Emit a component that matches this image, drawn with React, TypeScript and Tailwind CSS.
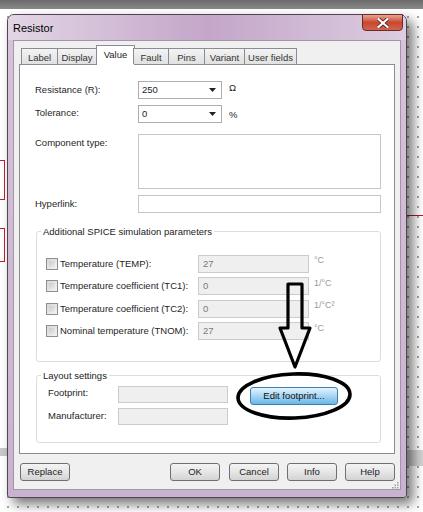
import React from 'react';

const tabs = [
  { label: 'Label', w: 'w-[37px]' },
  { label: 'Display', w: 'w-[40px]' },
  { label: 'Value', w: 'w-[39px]', active: true },
  { label: 'Fault', w: 'w-[36px]' },
  { label: 'Pins', w: 'w-[37px]' },
  { label: 'Variant', w: 'w-[41px]' },
  { label: 'User fields', w: 'w-[53px]' },
];

const spice = [
  { label: 'Temperature (TEMP):', value: '27', unit: '°C' },
  { label: 'Temperature coefficient (TC1):', value: '0', unit: '1/°C' },
  { label: 'Temperature coefficient (TC2):', value: '0', unit: '1/°C²' },
  { label: 'Nominal temperature (TNOM):', value: '27', unit: '°C' },
];

function Combo({ value }: { value: string }) {
  return (
    <div className="flex items-center justify-between w-[84px] h-[18px] border border-[#abadb3] bg-white pl-[3px] pr-[5px]">
      <span>{value}</span>
      <svg width="7" height="4" viewBox="0 0 7 4">
        <path d="M0 0h7L3.5 4z" fill="#222" />
      </svg>
    </div>
  );
}

function Btn({ children, className = '' }: { children: React.ReactNode; className?: string }) {
  return (
    <div
      className={`flex items-center justify-center h-[18px] w-[50px] rounded-[3px] border border-[#707070] bg-gradient-to-b from-[#f4f4f4] via-[#e6e6e6] to-[#d3d3d3] text-[#222] ${className}`}
    >
      {children}
    </div>
  );
}

export default function App() {
  return (
    <div
      className="relative w-[423px] h-[512px] overflow-hidden bg-white text-[9.5px] text-[#1e1e1e] leading-none"
      style={{ fontFamily: '"Liberation Sans", Arial, sans-serif' }}
    >
      {/* desktop: dotted grid */}
      <div className="absolute inset-0 bg-[radial-gradient(#a8a8a8_0.8px,transparent_0.8px)] bg-[size:10px_10px] bg-[position:3px_2px]" />
      {/* red wires in the background */}
      <div className="absolute left-0 top-[160px] w-[5px] h-[40px] border-r border-t border-b border-[#c0202a]" />
      <div className="absolute left-0 top-[228px] w-[5px] h-[34px] border-r border-t border-b border-[#c0202a]" />
      <div className="absolute right-0 top-[215px] w-[18px] h-px bg-[#b01c24]" />
      <div className="absolute left-0 top-[448px] w-[10px] h-[8px] bg-[#c9c9c9]" />
      <div className="absolute right-0 top-[450px] w-[20px] h-[16px] bg-[#d2d2d2]" />

      <div className="relative h-[9px] bg-gradient-to-b from-[#6a6a6a] to-[#8a8a8a]" />

      {/* dialog window */}
      <div className="relative ml-[7px] mt-[5px] w-[400px] h-[484px] rounded-t-[7px] rounded-b-[3px] border border-[#4e4452] bg-gradient-to-b from-[#d6c3da] to-[#c9b2ce] shadow-[6px_6px_12px_rgba(0,0,0,0.55)] flex flex-col">
        {/* title bar */}
        <div className="h-[25px] flex items-start justify-between rounded-t-[6px] bg-gradient-to-r from-[#e2d6e5] via-[#c4a6c9] to-[#dccde0]">
          <span className="mt-[8px] ml-[5px] text-[11px] text-black">Resistor</span>
          <div className="-mt-px mr-[3px] w-[41px] h-[17px] rounded-b-[4px] border border-[#6b2a24] bg-gradient-to-b from-[#e8a493] via-[#c9462f] to-[#d2634c] flex items-center justify-center">
            <svg width="12" height="10" viewBox="0 0 12 10">
              <path d="M1.5 1l9 8M10.5 1l-9 8" stroke="#3a1510" strokeWidth="3.6" strokeLinecap="square" />
              <path d="M1.5 1l9 8M10.5 1l-9 8" stroke="#fff" strokeWidth="2.2" strokeLinecap="square" />
            </svg>
          </div>
        </div>

        {/* client area */}
        <div className="mx-[5px] h-[450px] border border-[#a493a9] bg-[#f0f0f0] pt-[4px] px-[5px] flex flex-col">
          {/* tab strip */}
          <div className="relative z-10 flex items-end h-[19px] pl-[2px]">
            {tabs.map((t) =>
              t.active ? (
                <div
                  key={t.label}
                  className={`${t.w} h-[20px] -mb-px -mx-px bg-white border border-b-0 border-[#898c95] flex items-start justify-center pt-[4px]`}
                >
                  {t.label}
                </div>
              ) : (
                <div
                  key={t.label}
                  className={`${t.w} h-[16px] -ml-px first:ml-0 border border-b-0 border-[#898c95] bg-gradient-to-b from-[#f3f3f3] to-[#e1e1e1] flex items-center justify-center pt-[2px] text-[#333]`}
                >
                  {t.label}
                </div>
              ),
            )}
          </div>

          {/* tab panel */}
          <div className="h-[393px] border border-[#898c95] bg-white pl-[15px] pr-[12px] pt-[16px]">
            <div className="flex items-center">
              <span className="w-[103px]">Resistance (R):</span>
              <Combo value="250" />
              <span className="ml-[7px] -mt-[4px]">Ω</span>
            </div>
            <div className="flex items-center mt-[6px]">
              <span className="w-[103px] -mt-[2px]">Tolerance:</span>
              <Combo value="0" />
              <span className="ml-[7px] mt-[2px]">%</span>
            </div>
            <div className="flex items-start mt-[11px]">
              <span className="w-[103px] mt-[4px]">Component type:</span>
              <div className="w-[243px] h-[55px] border border-[#c3c6cc] bg-white" />
            </div>
            <div className="flex items-center mt-[6px]">
              <span className="w-[103px]">Hyperlink:</span>
              <div className="w-[243px] h-[18px] border border-[#c3c6cc] bg-white" />
            </div>

            <fieldset className="mt-[14px] ml-px w-[345px] h-[135px] rounded-[3px] border border-[#d5dfe5]">
              <legend className="ml-[4px] px-[2px] text-[#222]">Additional SPICE simulation parameters</legend>
              <div className="mt-[18px] pl-[9px] flex flex-col gap-[4.5px]">
                {spice.map((r) => (
                  <div key={r.label} className="flex items-center h-[18px]">
                    <div className="w-[12px] h-[12px] border border-[#8e8f8f] bg-gradient-to-br from-[#d7d7d7] to-[#f4f4f4] p-[2px]">
                      <div className="w-full h-full bg-gradient-to-br from-[#cbcbcb] to-[#ececec]" />
                    </div>
                    <span className="ml-[2px] w-[138px]">{r.label}</span>
                    <div className="w-[111px] h-[18px] border border-[#c8cbcf] bg-[#efefef] text-[#7a7a7a] flex items-center pl-[4px]">
                      {r.value}
                    </div>
                    <span className="ml-[5px] -mt-[6px] text-[#9a9a9a] text-[9px]">{r.unit}</span>
                  </div>
                ))}
              </div>
            </fieldset>

            <fieldset className="mt-[9px] ml-px w-[345px] h-[72px] rounded-[3px] border border-[#d5dfe5]">
              <legend className="ml-[4px] px-[2px] text-[#222]">Layout settings</legend>
              <div className="flex items-start mt-[5px] pl-[11px]">
                <div className="flex flex-col gap-[5px]">
                  <div className="flex items-center">
                    <span className="w-[70px] -mt-[3px]">Footprint:</span>
                    <div className="w-[110px] h-[17px] border border-[#c8cbcf] bg-[#efefef]" />
                  </div>
                  <div className="flex items-center">
                    <span className="w-[70px]">Manufacturer:</span>
                    <div className="w-[110px] h-[17px] border border-[#c8cbcf] bg-[#efefef]" />
                  </div>
                </div>
                <div className="ml-[22px] mt-[1px] w-[88px] h-[18px] rounded-[3px] border border-[#3c7fb1] bg-gradient-to-b from-[#e4f4fd] via-[#a6d6f4] to-[#68b6e8] flex items-center justify-center text-[#111]">
                  Edit footprint...
                </div>
              </div>
            </fieldset>
          </div>

          {/* bottom buttons */}
          <div className="flex items-center mt-[9px]">
            <Btn className="ml-px">Replace</Btn>
            <Btn className="ml-auto">OK</Btn>
            <Btn className="ml-[9px]">Cancel</Btn>
            <Btn className="ml-[8px]">Info</Btn>
            <Btn className="ml-[8px]">Help</Btn>
          </div>
          <div className="flex justify-end mt-[1px] -mr-[4px]">
            <svg width="7" height="7" viewBox="0 0 7 7">
              <g fill="#a0a0a0">
                <rect x="5" y="0" width="1.5" height="1.5" />
                <rect x="2.5" y="2.5" width="1.5" height="1.5" />
                <rect x="5" y="2.5" width="1.5" height="1.5" />
                <rect x="0" y="5" width="1.5" height="1.5" />
                <rect x="2.5" y="5" width="1.5" height="1.5" />
                <rect x="5" y="5" width="1.5" height="1.5" />
              </g>
            </svg>
          </div>
        </div>
      </div>

      {/* hand-drawn annotations */}
      <svg className="absolute left-[276px] top-[281px]" width="38" height="90" viewBox="0 0 38 90">
        <path d="M12 3H26V47H34L19 86L4 47H12Z" fill="none" stroke="#000" strokeWidth="3.2" strokeLinejoin="round" />
      </svg>
      <svg className="absolute left-[234px] top-[370px]" width="120" height="54" viewBox="0 0 120 54">
        <ellipse cx="60" cy="26" rx="56" ry="22" fill="none" stroke="#000" strokeWidth="3.6" transform="rotate(-2 60 26)" />
      </svg>
    </div>
  );
}
